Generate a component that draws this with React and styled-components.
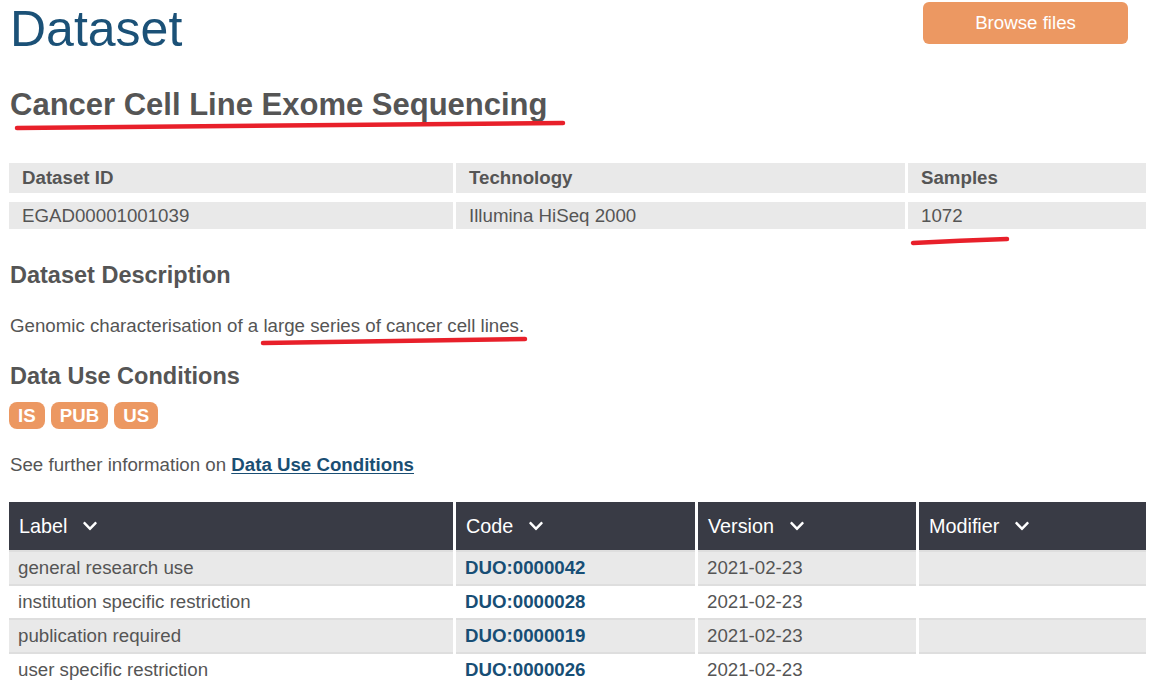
import React from 'react';
import styled, { createGlobalStyle } from 'styled-components';
import { FaChevronDown } from 'react-icons/fa';

const GlobalStyle = createGlobalStyle`
    html, body {
        margin: 0;
        padding: 0;
        background: #fff;
    }
    body {
        font-family: "Liberation Sans", Arial, sans-serif;
        color: #555;
    }
`

const Page = styled.div`
    padding: 0 13px 20px 9px;
`

const TopBar = styled.div`
    display: flex;
    justify-content: space-between;
    align-items: flex-start;
`

const PageTitle = styled.h1`
    margin: 4px 0 0 1px;
    font-size: 50px;
    line-height: 50px;
    font-weight: 400;
    color: #1b5177;
`

const BrowseButton = styled.button`
    margin: 2px 18px 0 0;
    width: 205px;
    height: 42px;
    border: none;
    border-radius: 6px;
    background: #ec9862;
    color: #fff;
    font-family: inherit;
    font-size: 18.7px;
    cursor: pointer;
`

const DatasetName = styled.h2`
    position: relative;
    display: inline-block;
    margin: 33px 0 0 1px;
    font-size: 31px;
    line-height: 36px;
    font-weight: 700;
    color: #555;
`

// hand-drawn red marks over the screenshot
const Scribble = styled.svg`
    position: absolute;
    left: ${p => p.$left}px;
    top: ${p => p.$top};
    overflow: visible;
    pointer-events: none;
`

function RedLine({ width, left = 0, top = '100%', rise = 4 }) {
    return (
        <Scribble $left={left} $top={top} width={width} height={8}>
            <path
                d={`M2 ${2 + rise} Q ${width / 2} ${2 + rise * 0.4} ${width - 2} 2`}
                stroke="#e8202a"
                strokeWidth="4.5"
                strokeLinecap="round"
                fill="none"
            />
        </Scribble>
    );
}

const InfoGrid = styled.div`
    margin-top: 40px;
    display: grid;
    grid-template-columns: 444px 449px 1fr;
    column-gap: 3px;
    row-gap: 9px;
`

const InfoCell = styled.div`
    position: relative;
    background: #e9e9e9;
    height: ${p => (p.$head ? 30 : 27)}px;
    display: flex;
    align-items: center;
    padding: 0 13px;
    font-size: 18.7px;
    font-weight: ${p => (p.$head ? 700 : 400)};
    color: #555;
`

const SectionTitle = styled.h3`
    margin: ${p => p.$top}px 0 0 1px;
    font-size: 23.5px;
    line-height: 28px;
    font-weight: 700;
    color: #555;
`

const Text = styled.p`
    margin: ${p => p.$top}px 0 0 1px;
    font-size: 18.7px;
    line-height: 21px;
`

const Marked = styled.span`
    position: relative;
`

const BadgeRow = styled.div`
    margin-top: 12px;
    display: flex;
    gap: 6px;
`

const Badge = styled.span`
    height: 27px;
    padding: 0 9px;
    border-radius: 8px;
    background: #ec9862;
    color: #fff;
    font-size: 18.7px;
    font-weight: 700;
    display: flex;
    align-items: center;
`

const Link = styled.a`
    color: #1a4e73;
    font-weight: 700;
    text-decoration: underline;
    text-underline-offset: 2px;
`

const Table = styled.div`
    margin-top: 27px;
`

const Row = styled.div`
    display: grid;
    grid-template-columns: 444px 239px 218px 1fr;
    column-gap: 3px;
    background: #fff;
`

const HeadCell = styled.div`
    height: 48px;
    background: #393b45;
    color: #fff;
    font-size: 19.8px;
    display: flex;
    align-items: center;
    gap: 15px;
    padding: 0 10px;
    svg {
        width: 16px;
        height: 16px;
    }
`

const BodyCell = styled.div`
    height: 32px;
    border-top: 2px solid #dedede;
    background: ${p => (p.$odd ? '#e9e9e9' : '#fff')};
    display: flex;
    align-items: center;
    padding: 0 9px;
    font-size: 18.7px;
    color: #555;
    font-weight: ${p => (p.$code ? 700 : 400)};
    ${p => p.$code && 'color: #174e75;'}
`

const conditions = [
    { label: 'general research use', code: 'DUO:0000042', version: '2021-02-23' },
    { label: 'institution specific restriction', code: 'DUO:0000028', version: '2021-02-23' },
    { label: 'publication required', code: 'DUO:0000019', version: '2021-02-23' },
    { label: 'user specific restriction', code: 'DUO:0000026', version: '2021-02-23' },
];

function App() {
    return (
        <Page>
            <GlobalStyle />

            <TopBar>
                <PageTitle>Dataset</PageTitle>
                <BrowseButton>Browse files</BrowseButton>
            </TopBar>

            <DatasetName>
                Cancer Cell Line Exome Sequencing
                <RedLine width={550} left={5} top="34px" rise={5} />
            </DatasetName>

            <InfoGrid>
                <InfoCell $head>Dataset ID</InfoCell>
                <InfoCell $head>Technology</InfoCell>
                <InfoCell $head>Samples</InfoCell>
                <InfoCell>EGAD00001001039</InfoCell>
                <InfoCell>Illumina HiSeq 2000</InfoCell>
                <InfoCell>
                    1072
                    <RedLine width={98} left={3} top="calc(100% + 8px)" rise={4} />
                </InfoCell>
            </InfoGrid>

            <SectionTitle $top={32}>Dataset Description</SectionTitle>
            <Text $top={26}>
                Genomic characterisation of a{' '}
                <Marked>
                    large series of cancer cell lines.
                    <RedLine width={266} left={-2} top="calc(100% + 1px)" rise={4} />
                </Marked>
            </Text>

            <SectionTitle $top={26}>Data Use Conditions</SectionTitle>
            <BadgeRow>
                <Badge>IS</Badge>
                <Badge>PUB</Badge>
                <Badge>US</Badge>
            </BadgeRow>

            <Text $top={25}>
                See further information on <Link href="#">Data Use Conditions</Link>
            </Text>

            <Table>
                <Row>
                    <HeadCell>Label <FaChevronDown /></HeadCell>
                    <HeadCell>Code <FaChevronDown /></HeadCell>
                    <HeadCell>Version <FaChevronDown /></HeadCell>
                    <HeadCell>Modifier <FaChevronDown /></HeadCell>
                </Row>
                {conditions.map((c, i) => (
                    <Row key={c.code}>
                        <BodyCell $odd={i % 2 === 0}>{c.label}</BodyCell>
                        <BodyCell $odd={i % 2 === 0} $code>{c.code}</BodyCell>
                        <BodyCell $odd={i % 2 === 0}>{c.version}</BodyCell>
                        <BodyCell $odd={i % 2 === 0}></BodyCell>
                    </Row>
                ))}
            </Table>
        </Page>
    );
}

export default App;
